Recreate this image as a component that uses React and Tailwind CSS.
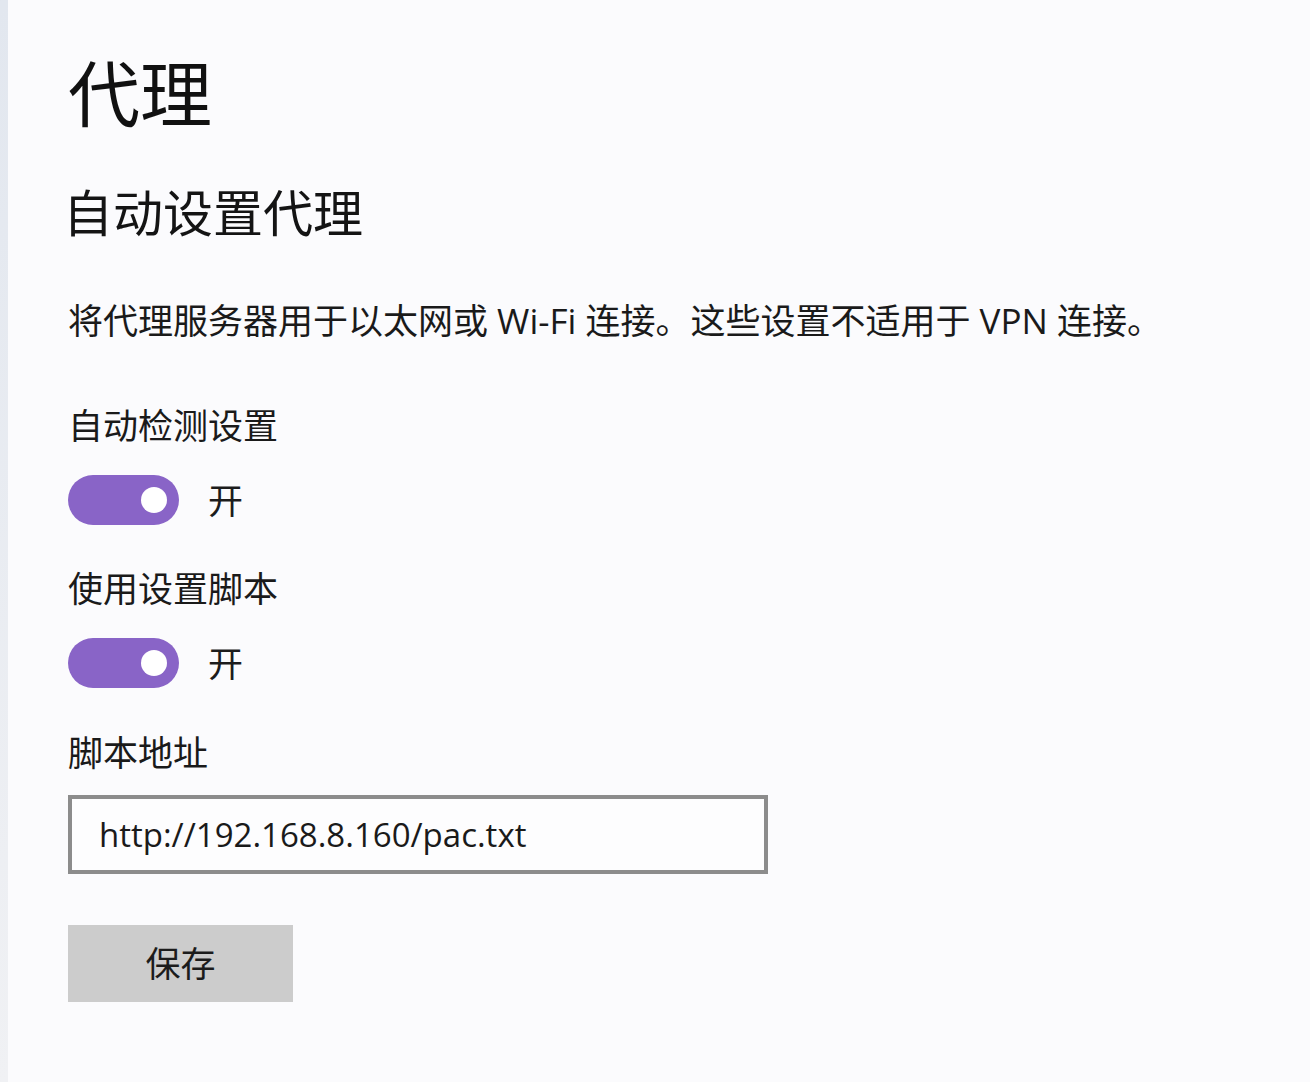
import React from "react";

const font = { fontFamily: '"Open Sans", "Noto Sans CJK SC", sans-serif' };

const Toggle = ({ on }) => (
  <div className="flex items-center h-[50px]">
    <div className="w-[111px] h-[50px] rounded-full bg-[#8964c7] flex items-center justify-end pr-[12px]">
      <div className="w-[26px] h-[26px] rounded-full bg-white" />
    </div>
    <span className="ml-[29px] text-[35px] leading-[35px] text-[#1c1c1c]">
      {on ? "开" : "关"}
    </span>
  </div>
);

const App = () => {
  return (
    <div
      className="flex w-full h-[1082px] bg-[#fbfbfd] overflow-hidden"
      style={font}
    >
      <div className="w-[8px] shrink-0 bg-gradient-to-b from-[#e2e7ef] to-[#f0f1f4]" />
      <div className="flex flex-col items-start pl-[60px] pt-[57px] text-[#1a1a1a]">
        <h1 className="text-[72px] leading-[72px] font-normal text-[#111]">代理</h1>
        <h2 className="mt-[59px] -ml-[5px] text-[50px] leading-[50px] font-normal text-[#141414]">
          自动设置代理
        </h2>
        <p className="mt-[65px] text-[35px] leading-[35px] whitespace-nowrap">
          将代理服务器用于以太网或 Wi-Fi 连接。这些设置不适用于 VPN 连接。
        </p>

        <div className="mt-[70px] text-[35px] leading-[35px]">自动检测设置</div>
        <div className="mt-[32px]">
          <Toggle on />
        </div>

        <div className="mt-[46px] text-[35px] leading-[35px]">使用设置脚本</div>
        <div className="mt-[32px]">
          <Toggle on />
        </div>

        <div className="mt-[47px] text-[35px] leading-[35px]">脚本地址</div>
        <div className="mt-[25px] w-[700px] h-[79px] border-[4px] border-[#8c8c8c] bg-[#fdfdfe] flex items-center pl-[27px]">
          <span className="text-[33px] leading-[40px] text-[#1a1a1a]">
            http://192.168.8.160/pac.txt
          </span>
        </div>

        <button className="mt-[51px] w-[225px] h-[77px] bg-[#cccccc] flex items-center justify-center text-[35px] leading-[35px] text-[#1c1c1c]">
          保存
        </button>
      </div>
    </div>
  );
};

export default App;
